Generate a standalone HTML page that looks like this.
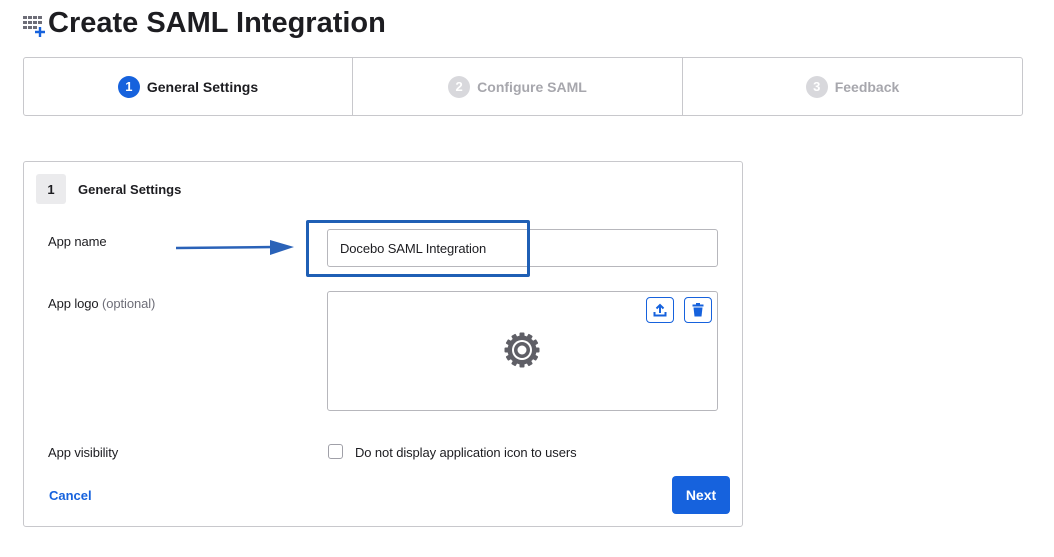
<!DOCTYPE html>
<html><head><meta charset="utf-8"><style>
*{box-sizing:border-box;margin:0;padding:0}
body{width:1054px;height:557px;background:#fff;font-family:"Liberation Sans",sans-serif;color:#1d1d21;position:relative;overflow:hidden}
.abs{position:absolute}
h1{position:absolute;left:48px;top:7px;font-size:29px;font-weight:700;letter-spacing:0px;color:#1d1d21;white-space:nowrap}
.steps{left:23px;top:57px;width:1000px;height:59px;border:1px solid #c8c8cc;border-radius:3px;display:flex}
.step{display:flex;align-items:center;justify-content:center;font-size:14px;font-weight:700;color:#a7a7ad;border-right:1px solid #c8c8cc}
.step:last-child{border-right:none}
.num{width:22px;height:22px;border-radius:50%;background:#d8d8dc;color:#fff;font-size:13px;display:flex;align-items:center;justify-content:center;margin-right:7px}
.step.on{color:#1d1d21}.step.on .num{background:#1662dd}
.card{left:23px;top:161px;width:720px;height:366px;border:1px solid #c8c8cc;border-radius:3px}
.lbl{font-size:13px;color:#1d1d21;letter-spacing:-0.1px}
.input{border:1px solid #b7b7bc;border-radius:3px}
.btn{width:28px;height:26px;border:1px solid #1662dd;border-radius:4px;display:flex;align-items:center;justify-content:center}
</style></head><body>
<svg class="abs" style="left:23px;top:15px" width="24" height="24" viewBox="0 0 24 24">
<g fill="#6e6e78"><rect x="0" y="1" width="4" height="3"/><rect x="5" y="1" width="4" height="3"/><rect x="10" y="1" width="4" height="3"/><rect x="15" y="1" width="4" height="3"/>
<rect x="0" y="6" width="4" height="3"/><rect x="5" y="6" width="4" height="3"/><rect x="10" y="6" width="4" height="3"/><rect x="15" y="6" width="4" height="3"/>
<rect x="0" y="11" width="4" height="3"/><rect x="5" y="11" width="4" height="3"/><rect x="10" y="11" width="4" height="3"/></g>
<path d="M17 12v10M12 17h10" stroke="#1662dd" stroke-width="2.4"/></svg>
<h1>Create SAML Integration</h1>
<div class="abs steps">
<div class="step on" style="width:329px"><span class="num">1</span>General Settings</div>
<div class="step" style="width:330px"><span class="num">2</span>Configure SAML</div>
<div class="step" style="width:339px"><span class="num">3</span>Feedback</div>
</div>
<div class="abs card"></div>
<div class="abs" style="left:36px;top:174px;width:30px;height:30px;background:#ebebed;border-radius:3px;font-size:13px;font-weight:700;display:flex;align-items:center;justify-content:center">1</div>
<div class="abs" style="left:78px;top:182px;font-size:13px;font-weight:700">General Settings</div>
<div class="abs lbl" style="left:48px;top:234px">App name</div>
<div class="abs input" style="left:327px;top:229px;width:391px;height:38px"></div>
<div class="abs lbl" style="left:340px;top:241px">Docebo SAML Integration</div>
<div class="abs" style="left:306px;top:220px;width:224px;height:57px;border:3px solid #1f5fb5;border-radius:2px"></div>
<svg class="abs" style="left:174px;top:238px" width="122" height="20"><path d="M2 10 L100 9" stroke="#2a62b8" stroke-width="2.5"/><path d="M96 2 L120 9 L96 17 Z" fill="#2a62b8"/></svg>
<div class="abs lbl" style="left:48px;top:296px">App logo <span style="color:#6e6e78">(optional)</span></div>
<div class="abs input" style="left:327px;top:291px;width:391px;height:120px"></div>
<div class="abs btn" style="left:646px;top:297px"><svg width="14" height="14" viewBox="0 0 14 14"><path d="M7 10V2M3.5 5.5L7 2l3.5 3.5" stroke="#1662dd" stroke-width="2" fill="none"/><path d="M1.5 9v3.5h11V9" stroke="#1662dd" stroke-width="2" fill="none"/></svg></div>
<div class="abs btn" style="left:684px;top:297px"><svg width="12" height="14" viewBox="0 0 12 14"><rect x="0.5" y="1.5" width="11" height="2" fill="#1662dd"/><rect x="4" y="0" width="4" height="2" fill="#1662dd"/><path d="M1.5 4.5h9l-1 9h-7z" fill="#1662dd"/></svg></div>
<svg class="abs" style="left:504px;top:332px" width="36" height="36" viewBox="0 0 36 36"><g fill="#5f5f66"><circle cx="18" cy="18" r="14.5"/><g id="t"><rect x="15.5" y="0.5" width="5" height="35" rx="1"/></g><use href="#t" transform="rotate(30 18 18)"/><use href="#t" transform="rotate(60 18 18)"/><use href="#t" transform="rotate(90 18 18)"/><use href="#t" transform="rotate(120 18 18)"/><use href="#t" transform="rotate(150 18 18)"/></g><circle cx="18" cy="18" r="10" fill="#fff"/><circle cx="18" cy="18" r="8" fill="#5f5f66"/><circle cx="18" cy="18" r="4.5" fill="#fff"/></svg>
<div class="abs lbl" style="left:48px;top:445px">App visibility</div>
<div class="abs" style="left:328px;top:444px;width:15px;height:15px;border:1.5px solid #a0a0a8;border-radius:3px"></div>
<div class="abs lbl" style="left:355px;top:445px">Do not display application icon to users</div>
<div class="abs" style="left:49px;top:488px;font-size:13px;font-weight:700;color:#1662dd">Cancel</div>
<div class="abs" style="left:672px;top:476px;width:58px;height:38px;background:#1662dd;border-radius:4px;color:#fff;font-size:14px;font-weight:700;display:flex;align-items:center;justify-content:center">Next</div>
</body></html>
